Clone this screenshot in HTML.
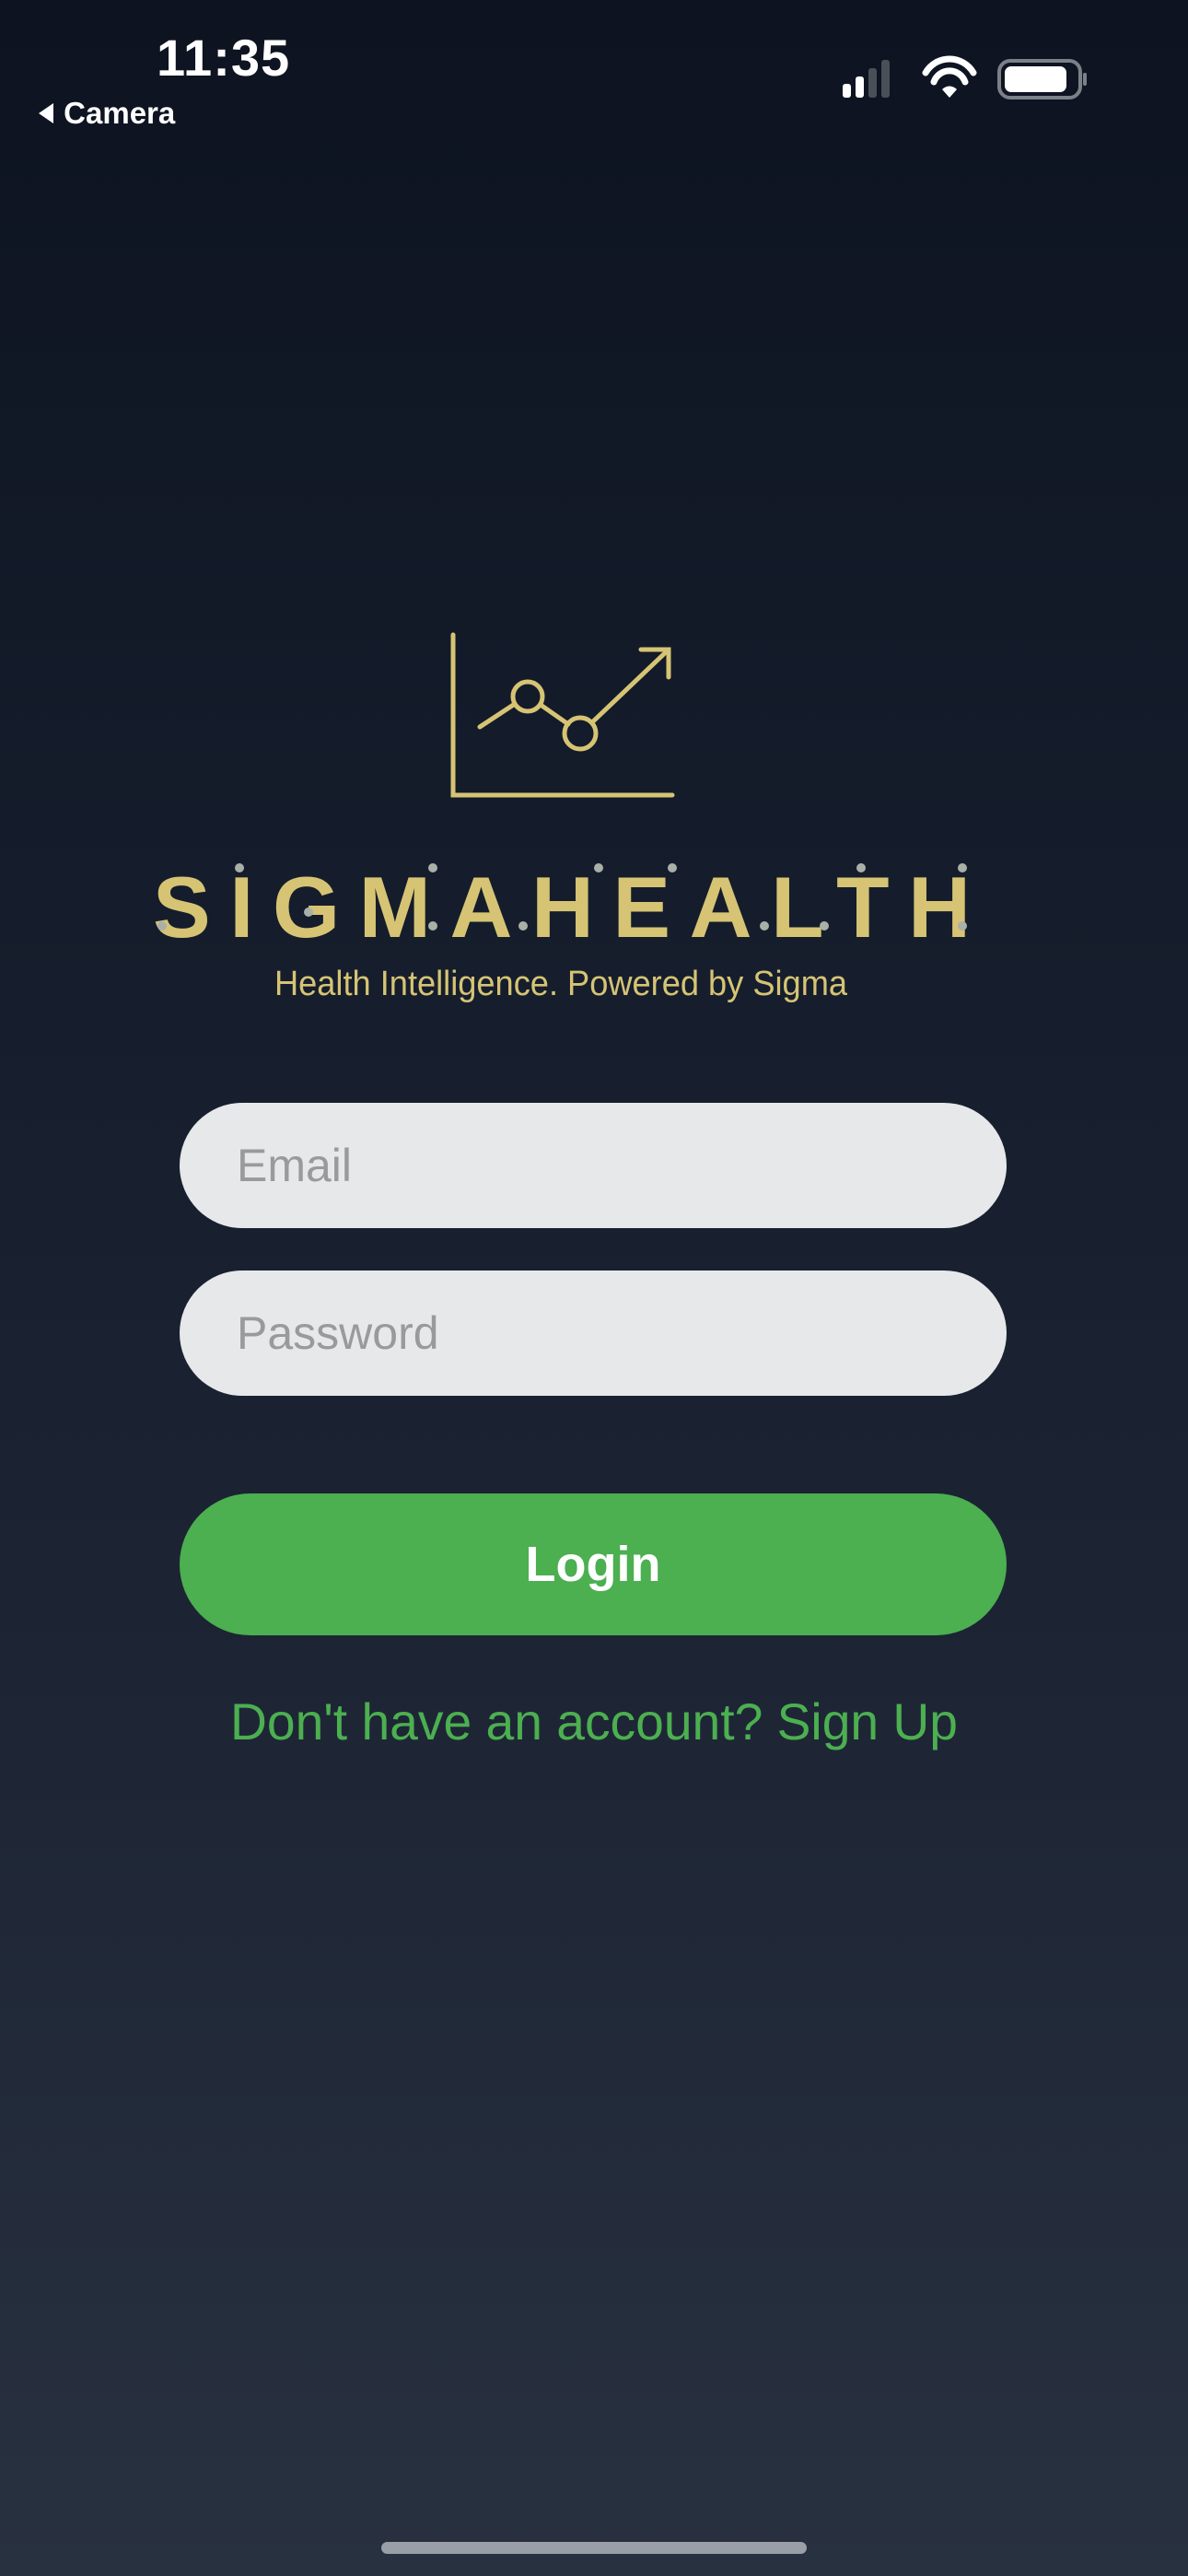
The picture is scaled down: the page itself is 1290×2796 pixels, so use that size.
<!DOCTYPE html>
<html><head><meta charset="utf-8">
<style>
html,body{margin:0;padding:0}
body{width:1290px;height:2796px;position:relative;overflow:hidden;
background:linear-gradient(180deg,#0d1320 0%,#151d2c 35%,#1d2535 65%,#283140 100%);
font-family:"Liberation Sans",sans-serif}
.abs{position:absolute}
.field{position:absolute;left:195px;width:898px;height:136px;border-radius:68px;background:#e7e8ea;}
.field span{position:absolute;left:62px;top:0;line-height:136px;font-size:50px;color:#9a9a9c}
</style></head><body>
<div class="abs" style="left:170px;top:30px;font-size:56px;font-weight:bold;color:#fff;letter-spacing:1px">11:35</div>
<div class="abs" style="left:38px;top:104px;font-size:33px;font-weight:bold;color:#fff">
<svg width="22" height="26" style="vertical-align:-2px"><path d="M20 2 L4 13 L20 24Z" fill="#fff"/></svg> Camera</div>
<svg class="abs" style="left:910px;top:60px" width="270" height="52">
<rect x="5" y="31" width="9" height="15" rx="3" fill="#fff"/>
<rect x="19" y="23" width="9" height="23" rx="3" fill="#fff"/>
<rect x="33" y="14" width="9" height="32" rx="3" fill="#4a4f58"/>
<rect x="47" y="5" width="9" height="41" rx="3" fill="#4a4f58"/>
<path d="M95 19 A30 30 0 0 1 147 19" stroke="#fff" stroke-width="7" fill="none" stroke-linecap="round"/>
<path d="M104 29 A18 18 0 0 1 138 29" stroke="#fff" stroke-width="7" fill="none" stroke-linecap="round"/>
<path d="M113 37 L121 46 L129 37 A11 11 0 0 0 113 37Z" fill="#fff"/>
<rect x="175" y="6" width="88" height="40" rx="12" fill="none" stroke="#7c8089" stroke-width="4"/>
<rect x="181" y="12" width="67" height="28" rx="7" fill="#fff"/>
<rect x="266" y="19" width="4" height="14" rx="2" fill="#7c8089"/>
</svg>

<svg class="abs" style="left:0;top:660px" width="1290" height="450">
<g stroke="#d6c474" stroke-width="5" fill="none" stroke-linecap="round">
<path d="M492 29 V203 H730"/>
<path d="M521 129 L559 104"/>
<circle cx="573" cy="96" r="16"/>
<path d="M587 105 L617 126"/>
<circle cx="630" cy="136" r="17"/>
<path d="M643 124 L726 45"/>
<path d="M696 45 H726 V75"/>
</g>
<text x="166" y="357" font-family="Liberation Sans,sans-serif" font-weight="bold" font-size="94" fill="#d6c474" textLength="888" lengthAdjust="spacing">SIGMAHEALTH</text>
<g fill="#a9b0a8">
<circle cx="176" cy="345" r="5"/><circle cx="260" cy="282" r="5"/><circle cx="335" cy="330" r="5"/>
<circle cx="470" cy="282" r="5"/><circle cx="470" cy="345" r="5"/><circle cx="568" cy="345" r="5"/>
<circle cx="650" cy="282" r="5"/><circle cx="730" cy="282" r="5"/><circle cx="830" cy="345" r="5"/>
<circle cx="895" cy="345" r="5"/><circle cx="935" cy="282" r="5"/><circle cx="1045" cy="282" r="5"/><circle cx="1045" cy="345" r="5"/>
</g>
<text x="609" y="420" text-anchor="middle" font-family="Liberation Sans Narrow,Liberation Sans,sans-serif" font-size="38" fill="#d6c474" textLength="622" lengthAdjust="spacingAndGlyphs">Health Intelligence. Powered by Sigma</text>
</svg>

<div class="field" style="top:1197px"><span>Email</span></div>
<div class="field" style="top:1379px"><span>Password</span></div>
<div class="abs" style="left:195px;top:1621px;width:898px;height:154px;border-radius:77px;background:#4caf50;color:#fff;font-weight:bold;font-size:54px;line-height:154px;text-align:center">Login</div>
<svg class="abs" style="left:0;top:1830px" width="1290" height="80">
<text x="645" y="58" text-anchor="middle" font-family="Liberation Sans,sans-serif" font-size="56" fill="#4caf50" textLength="790" lengthAdjust="spacingAndGlyphs">Don't have an account? Sign Up</text>
</svg>
<div class="abs" style="left:414px;top:2759px;width:462px;height:13px;border-radius:7px;background:#9a9ea6"></div>
</body></html>
